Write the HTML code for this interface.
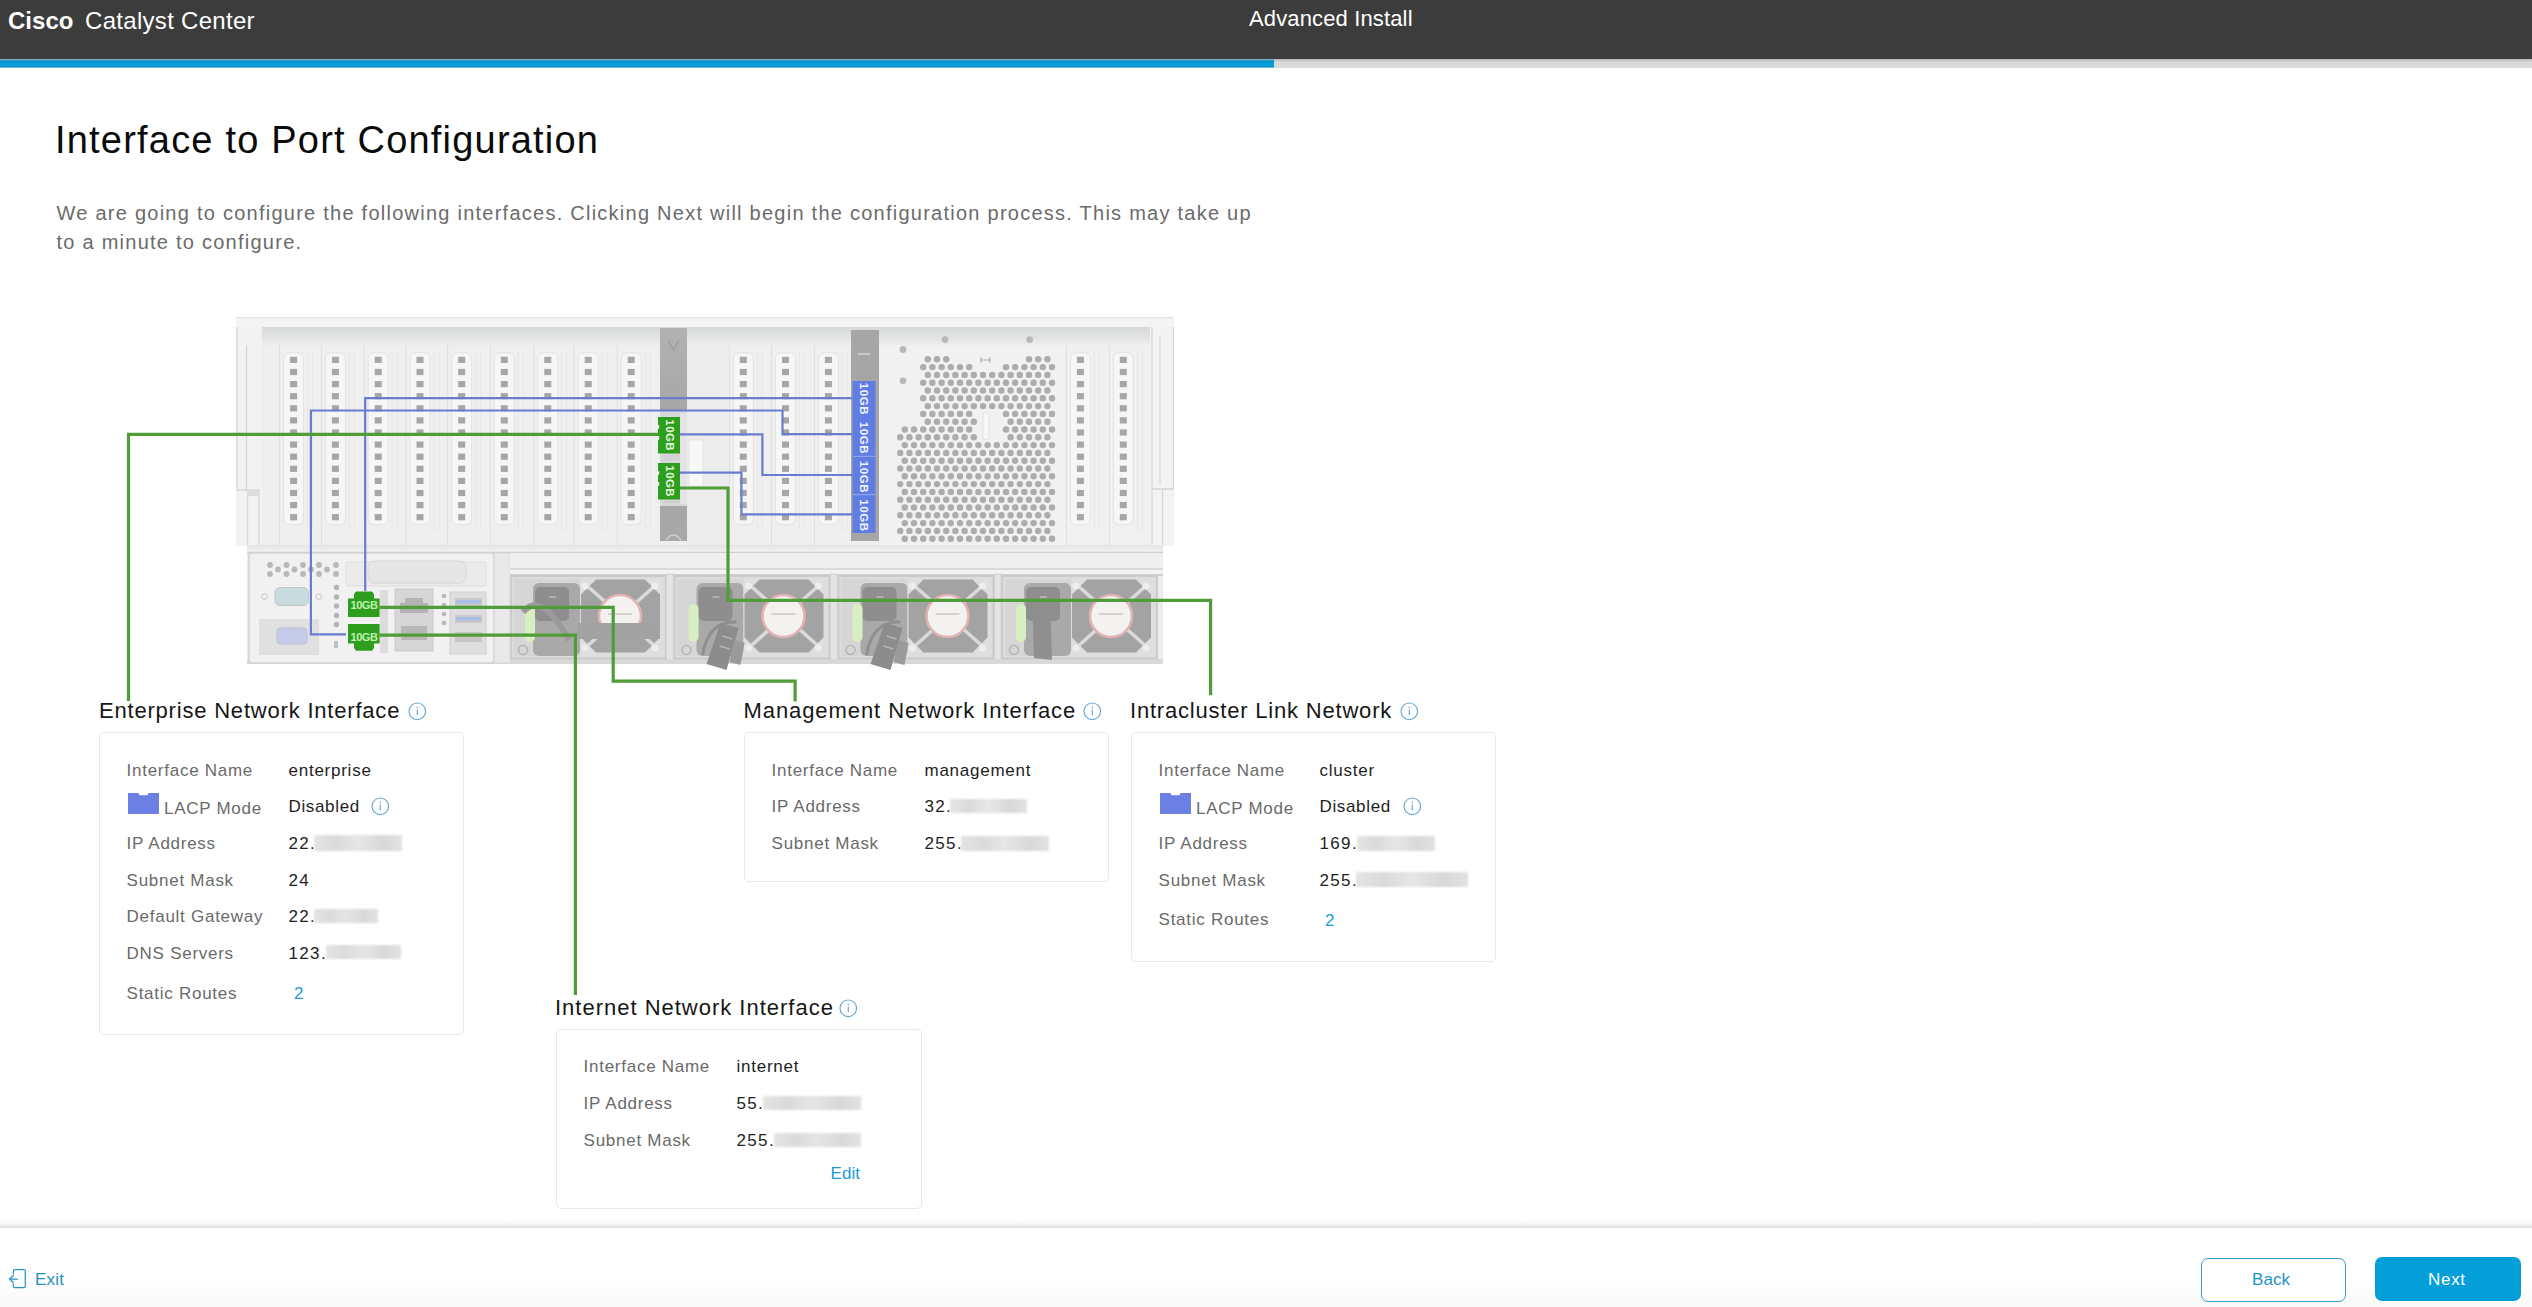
<!DOCTYPE html>
<html><head><meta charset="utf-8"><title>Interface to Port Configuration</title>
<style>
html,body{margin:0;padding:0;}
body{width:2532px;height:1307px;position:relative;overflow:hidden;background:#fff;font-family:"Liberation Sans",sans-serif;}
.t{position:absolute;white-space:nowrap;}
.r{position:absolute;}
svg.r{overflow:visible;}
</style></head><body>
<div class="r" style="left:0.0px;top:0.0px;width:2532.0px;height:59.0px;background:#3c3c3c"></div>
<div class="t" style="left:8.0px;top:9.0px;font-size:24px;line-height:24px;color:#fff;letter-spacing:0.03px;font-weight:700;">Cisco</div>
<div class="t" style="left:85.0px;top:9.0px;font-size:24px;line-height:24px;color:#fff;letter-spacing:0.3px;font-weight:400;">Catalyst Center</div>
<div class="t" style="left:1249.0px;top:7.9px;font-size:22px;line-height:22px;color:#fff;letter-spacing:0.14px;font-weight:400;">Advanced Install</div>
<div class="r" style="left:0.0px;top:59.0px;width:2532.0px;height:9.0px;background:linear-gradient(#b8b8b8,#d8d8d8 35%,#dcdcdc)"></div>
<div class="r" style="left:0.0px;top:59.0px;width:1274.0px;height:9.0px;background:linear-gradient(#86b8d0,#0a8fc0 25%,#049fd9 45%,#049fd9 75%,#1a8fc0 85%,#8fd0ea)"></div>
<div class="t" style="left:55.0px;top:121.4px;font-size:38px;line-height:38px;color:#0a0a0a;letter-spacing:1.2px;font-weight:400;">Interface to Port Configuration</div>
<div class="t" style="left:56.5px;top:202.7px;font-size:20px;line-height:20px;color:#6b6b6b;letter-spacing:1.25px;font-weight:400;">We are going to configure the following interfaces. Clicking Next will begin the configuration process. This may take up</div>
<div class="t" style="left:56.5px;top:232.3px;font-size:20px;line-height:20px;color:#6b6b6b;letter-spacing:1.25px;font-weight:400;">to a minute to configure.</div>
<svg class="r" style="left:0;top:0" width="2532" height="1307" viewBox="0 0 2532 1307"><rect x="236" y="317" width="938" height="229" fill="#efefef"/><rect x="236" y="317" width="938" height="10" fill="#f4f4f4"/><rect x="236" y="317" width="938" height="1.2" fill="#e2e2e2"/><defs><linearGradient id="gband" x1="0" y1="0" x2="0" y2="1"><stop offset="0" stop-color="#d8dada"/><stop offset="0.45" stop-color="#e2e3e3"/><stop offset="1" stop-color="#efefef" stop-opacity="0"/></linearGradient><linearGradient id="grail" x1="0" y1="0" x2="0" y2="1"><stop offset="0" stop-color="#e4e4e4"/><stop offset="1" stop-color="#f3f3f3"/></linearGradient></defs><rect x="254" y="327" width="898" height="24" fill="url(#gband)"/><rect x="236" y="327" width="26" height="219" fill="#f2f2f2"/><path d="M237 327 V490 H259 V546 M246.5 345 V490 M247.5 496 V546" stroke="#d6d6d6" stroke-width="1.3" fill="none"/><rect x="247" y="490" width="12" height="6" fill="#dddddd"/><rect x="1150" y="327" width="24" height="219" fill="#f3f3f3"/><rect x="1135" y="345" width="15" height="201" fill="#efefef"/><path d="M1135 345 V546" stroke="#dedede" stroke-width="1"/><path d="M1152 327 V489 H1174 M1173.5 327 V489 M1162.5 489 V546 M1152 489 V546" stroke="#d4d4d4" stroke-width="1.3" fill="none"/><path d="M1160 336 V485" stroke="#e2e2e2" stroke-width="2"/><path d="M279.6 345 V546" stroke="#dedede" stroke-width="1"/><path d="M307.6 352 V530 M312.6 352 V530" stroke="#e6e6e6" stroke-width="1"/><rect x="283.6" y="352.7" width="20" height="172" rx="6" fill="#f6f6f6" stroke="#e2e2e2" stroke-width="1"/><rect x="290.1" y="356.8" width="7" height="6.2" fill="#a6a6a6"/><rect x="290.1" y="368.9" width="7" height="6.2" fill="#a6a6a6"/><rect x="290.1" y="381.0" width="7" height="6.2" fill="#a6a6a6"/><rect x="290.1" y="393.1" width="7" height="6.2" fill="#a6a6a6"/><rect x="290.1" y="405.2" width="7" height="6.2" fill="#a6a6a6"/><rect x="290.1" y="417.3" width="7" height="6.2" fill="#a6a6a6"/><rect x="290.1" y="429.4" width="7" height="6.2" fill="#a6a6a6"/><rect x="290.1" y="441.5" width="7" height="6.2" fill="#a6a6a6"/><rect x="290.1" y="453.6" width="7" height="6.2" fill="#a6a6a6"/><rect x="290.1" y="465.7" width="7" height="6.2" fill="#a6a6a6"/><rect x="290.1" y="477.8" width="7" height="6.2" fill="#a6a6a6"/><rect x="290.1" y="489.9" width="7" height="6.2" fill="#a6a6a6"/><rect x="290.1" y="502.0" width="7" height="6.2" fill="#a6a6a6"/><rect x="290.1" y="514.1" width="7" height="6.2" fill="#a6a6a6"/><path d="M321.4 345 V546" stroke="#dedede" stroke-width="1"/><path d="M349.4 352 V530 M354.4 352 V530" stroke="#e6e6e6" stroke-width="1"/><rect x="325.4" y="352.7" width="20" height="172" rx="6" fill="#f6f6f6" stroke="#e2e2e2" stroke-width="1"/><rect x="331.9" y="356.8" width="7" height="6.2" fill="#a6a6a6"/><rect x="331.9" y="368.9" width="7" height="6.2" fill="#a6a6a6"/><rect x="331.9" y="381.0" width="7" height="6.2" fill="#a6a6a6"/><rect x="331.9" y="393.1" width="7" height="6.2" fill="#a6a6a6"/><rect x="331.9" y="405.2" width="7" height="6.2" fill="#a6a6a6"/><rect x="331.9" y="417.3" width="7" height="6.2" fill="#a6a6a6"/><rect x="331.9" y="429.4" width="7" height="6.2" fill="#a6a6a6"/><rect x="331.9" y="441.5" width="7" height="6.2" fill="#a6a6a6"/><rect x="331.9" y="453.6" width="7" height="6.2" fill="#a6a6a6"/><rect x="331.9" y="465.7" width="7" height="6.2" fill="#a6a6a6"/><rect x="331.9" y="477.8" width="7" height="6.2" fill="#a6a6a6"/><rect x="331.9" y="489.9" width="7" height="6.2" fill="#a6a6a6"/><rect x="331.9" y="502.0" width="7" height="6.2" fill="#a6a6a6"/><rect x="331.9" y="514.1" width="7" height="6.2" fill="#a6a6a6"/><path d="M364.2 345 V546" stroke="#dedede" stroke-width="1"/><path d="M392.2 352 V530 M397.2 352 V530" stroke="#e6e6e6" stroke-width="1"/><rect x="368.2" y="352.7" width="20" height="172" rx="6" fill="#f6f6f6" stroke="#e2e2e2" stroke-width="1"/><rect x="374.7" y="356.8" width="7" height="6.2" fill="#a6a6a6"/><rect x="374.7" y="368.9" width="7" height="6.2" fill="#a6a6a6"/><rect x="374.7" y="381.0" width="7" height="6.2" fill="#a6a6a6"/><rect x="374.7" y="393.1" width="7" height="6.2" fill="#a6a6a6"/><rect x="374.7" y="405.2" width="7" height="6.2" fill="#a6a6a6"/><rect x="374.7" y="417.3" width="7" height="6.2" fill="#a6a6a6"/><rect x="374.7" y="429.4" width="7" height="6.2" fill="#a6a6a6"/><rect x="374.7" y="441.5" width="7" height="6.2" fill="#a6a6a6"/><rect x="374.7" y="453.6" width="7" height="6.2" fill="#a6a6a6"/><rect x="374.7" y="465.7" width="7" height="6.2" fill="#a6a6a6"/><rect x="374.7" y="477.8" width="7" height="6.2" fill="#a6a6a6"/><rect x="374.7" y="489.9" width="7" height="6.2" fill="#a6a6a6"/><rect x="374.7" y="502.0" width="7" height="6.2" fill="#a6a6a6"/><rect x="374.7" y="514.1" width="7" height="6.2" fill="#a6a6a6"/><path d="M406.0 345 V546" stroke="#dedede" stroke-width="1"/><path d="M434.0 352 V530 M439.0 352 V530" stroke="#e6e6e6" stroke-width="1"/><rect x="410.0" y="352.7" width="20" height="172" rx="6" fill="#f6f6f6" stroke="#e2e2e2" stroke-width="1"/><rect x="416.5" y="356.8" width="7" height="6.2" fill="#a6a6a6"/><rect x="416.5" y="368.9" width="7" height="6.2" fill="#a6a6a6"/><rect x="416.5" y="381.0" width="7" height="6.2" fill="#a6a6a6"/><rect x="416.5" y="393.1" width="7" height="6.2" fill="#a6a6a6"/><rect x="416.5" y="405.2" width="7" height="6.2" fill="#a6a6a6"/><rect x="416.5" y="417.3" width="7" height="6.2" fill="#a6a6a6"/><rect x="416.5" y="429.4" width="7" height="6.2" fill="#a6a6a6"/><rect x="416.5" y="441.5" width="7" height="6.2" fill="#a6a6a6"/><rect x="416.5" y="453.6" width="7" height="6.2" fill="#a6a6a6"/><rect x="416.5" y="465.7" width="7" height="6.2" fill="#a6a6a6"/><rect x="416.5" y="477.8" width="7" height="6.2" fill="#a6a6a6"/><rect x="416.5" y="489.9" width="7" height="6.2" fill="#a6a6a6"/><rect x="416.5" y="502.0" width="7" height="6.2" fill="#a6a6a6"/><rect x="416.5" y="514.1" width="7" height="6.2" fill="#a6a6a6"/><path d="M447.7 345 V546" stroke="#dedede" stroke-width="1"/><path d="M475.7 352 V530 M480.7 352 V530" stroke="#e6e6e6" stroke-width="1"/><rect x="451.7" y="352.7" width="20" height="172" rx="6" fill="#f6f6f6" stroke="#e2e2e2" stroke-width="1"/><rect x="458.2" y="356.8" width="7" height="6.2" fill="#a6a6a6"/><rect x="458.2" y="368.9" width="7" height="6.2" fill="#a6a6a6"/><rect x="458.2" y="381.0" width="7" height="6.2" fill="#a6a6a6"/><rect x="458.2" y="393.1" width="7" height="6.2" fill="#a6a6a6"/><rect x="458.2" y="405.2" width="7" height="6.2" fill="#a6a6a6"/><rect x="458.2" y="417.3" width="7" height="6.2" fill="#a6a6a6"/><rect x="458.2" y="429.4" width="7" height="6.2" fill="#a6a6a6"/><rect x="458.2" y="441.5" width="7" height="6.2" fill="#a6a6a6"/><rect x="458.2" y="453.6" width="7" height="6.2" fill="#a6a6a6"/><rect x="458.2" y="465.7" width="7" height="6.2" fill="#a6a6a6"/><rect x="458.2" y="477.8" width="7" height="6.2" fill="#a6a6a6"/><rect x="458.2" y="489.9" width="7" height="6.2" fill="#a6a6a6"/><rect x="458.2" y="502.0" width="7" height="6.2" fill="#a6a6a6"/><rect x="458.2" y="514.1" width="7" height="6.2" fill="#a6a6a6"/><path d="M490.3 345 V546" stroke="#dedede" stroke-width="1"/><path d="M518.3 352 V530 M523.3 352 V530" stroke="#e6e6e6" stroke-width="1"/><rect x="494.3" y="352.7" width="20" height="172" rx="6" fill="#f6f6f6" stroke="#e2e2e2" stroke-width="1"/><rect x="500.8" y="356.8" width="7" height="6.2" fill="#a6a6a6"/><rect x="500.8" y="368.9" width="7" height="6.2" fill="#a6a6a6"/><rect x="500.8" y="381.0" width="7" height="6.2" fill="#a6a6a6"/><rect x="500.8" y="393.1" width="7" height="6.2" fill="#a6a6a6"/><rect x="500.8" y="405.2" width="7" height="6.2" fill="#a6a6a6"/><rect x="500.8" y="417.3" width="7" height="6.2" fill="#a6a6a6"/><rect x="500.8" y="429.4" width="7" height="6.2" fill="#a6a6a6"/><rect x="500.8" y="441.5" width="7" height="6.2" fill="#a6a6a6"/><rect x="500.8" y="453.6" width="7" height="6.2" fill="#a6a6a6"/><rect x="500.8" y="465.7" width="7" height="6.2" fill="#a6a6a6"/><rect x="500.8" y="477.8" width="7" height="6.2" fill="#a6a6a6"/><rect x="500.8" y="489.9" width="7" height="6.2" fill="#a6a6a6"/><rect x="500.8" y="502.0" width="7" height="6.2" fill="#a6a6a6"/><rect x="500.8" y="514.1" width="7" height="6.2" fill="#a6a6a6"/><path d="M533.8 345 V546" stroke="#dedede" stroke-width="1"/><path d="M561.8 352 V530 M566.8 352 V530" stroke="#e6e6e6" stroke-width="1"/><rect x="537.8" y="352.7" width="20" height="172" rx="6" fill="#f6f6f6" stroke="#e2e2e2" stroke-width="1"/><rect x="544.3" y="356.8" width="7" height="6.2" fill="#a6a6a6"/><rect x="544.3" y="368.9" width="7" height="6.2" fill="#a6a6a6"/><rect x="544.3" y="381.0" width="7" height="6.2" fill="#a6a6a6"/><rect x="544.3" y="393.1" width="7" height="6.2" fill="#a6a6a6"/><rect x="544.3" y="405.2" width="7" height="6.2" fill="#a6a6a6"/><rect x="544.3" y="417.3" width="7" height="6.2" fill="#a6a6a6"/><rect x="544.3" y="429.4" width="7" height="6.2" fill="#a6a6a6"/><rect x="544.3" y="441.5" width="7" height="6.2" fill="#a6a6a6"/><rect x="544.3" y="453.6" width="7" height="6.2" fill="#a6a6a6"/><rect x="544.3" y="465.7" width="7" height="6.2" fill="#a6a6a6"/><rect x="544.3" y="477.8" width="7" height="6.2" fill="#a6a6a6"/><rect x="544.3" y="489.9" width="7" height="6.2" fill="#a6a6a6"/><rect x="544.3" y="502.0" width="7" height="6.2" fill="#a6a6a6"/><rect x="544.3" y="514.1" width="7" height="6.2" fill="#a6a6a6"/><path d="M574.2 345 V546" stroke="#dedede" stroke-width="1"/><path d="M602.2 352 V530 M607.2 352 V530" stroke="#e6e6e6" stroke-width="1"/><rect x="578.2" y="352.7" width="20" height="172" rx="6" fill="#f6f6f6" stroke="#e2e2e2" stroke-width="1"/><rect x="584.7" y="356.8" width="7" height="6.2" fill="#a6a6a6"/><rect x="584.7" y="368.9" width="7" height="6.2" fill="#a6a6a6"/><rect x="584.7" y="381.0" width="7" height="6.2" fill="#a6a6a6"/><rect x="584.7" y="393.1" width="7" height="6.2" fill="#a6a6a6"/><rect x="584.7" y="405.2" width="7" height="6.2" fill="#a6a6a6"/><rect x="584.7" y="417.3" width="7" height="6.2" fill="#a6a6a6"/><rect x="584.7" y="429.4" width="7" height="6.2" fill="#a6a6a6"/><rect x="584.7" y="441.5" width="7" height="6.2" fill="#a6a6a6"/><rect x="584.7" y="453.6" width="7" height="6.2" fill="#a6a6a6"/><rect x="584.7" y="465.7" width="7" height="6.2" fill="#a6a6a6"/><rect x="584.7" y="477.8" width="7" height="6.2" fill="#a6a6a6"/><rect x="584.7" y="489.9" width="7" height="6.2" fill="#a6a6a6"/><rect x="584.7" y="502.0" width="7" height="6.2" fill="#a6a6a6"/><rect x="584.7" y="514.1" width="7" height="6.2" fill="#a6a6a6"/><path d="M617.2 345 V546" stroke="#dedede" stroke-width="1"/><path d="M645.2 352 V530 M650.2 352 V530" stroke="#e6e6e6" stroke-width="1"/><rect x="621.2" y="352.7" width="20" height="172" rx="6" fill="#f6f6f6" stroke="#e2e2e2" stroke-width="1"/><rect x="627.7" y="356.8" width="7" height="6.2" fill="#a6a6a6"/><rect x="627.7" y="368.9" width="7" height="6.2" fill="#a6a6a6"/><rect x="627.7" y="381.0" width="7" height="6.2" fill="#a6a6a6"/><rect x="627.7" y="393.1" width="7" height="6.2" fill="#a6a6a6"/><rect x="627.7" y="405.2" width="7" height="6.2" fill="#a6a6a6"/><rect x="627.7" y="417.3" width="7" height="6.2" fill="#a6a6a6"/><rect x="627.7" y="429.4" width="7" height="6.2" fill="#a6a6a6"/><rect x="627.7" y="441.5" width="7" height="6.2" fill="#a6a6a6"/><rect x="627.7" y="453.6" width="7" height="6.2" fill="#a6a6a6"/><rect x="627.7" y="465.7" width="7" height="6.2" fill="#a6a6a6"/><rect x="627.7" y="477.8" width="7" height="6.2" fill="#a6a6a6"/><rect x="627.7" y="489.9" width="7" height="6.2" fill="#a6a6a6"/><rect x="627.7" y="502.0" width="7" height="6.2" fill="#a6a6a6"/><rect x="627.7" y="514.1" width="7" height="6.2" fill="#a6a6a6"/><path d="M729.3 345 V546" stroke="#dedede" stroke-width="1"/><path d="M757.3 352 V530 M762.3 352 V530" stroke="#e6e6e6" stroke-width="1"/><rect x="733.3" y="352.7" width="20" height="172" rx="6" fill="#f6f6f6" stroke="#e2e2e2" stroke-width="1"/><rect x="739.8" y="356.8" width="7" height="6.2" fill="#a6a6a6"/><rect x="739.8" y="368.9" width="7" height="6.2" fill="#a6a6a6"/><rect x="739.8" y="381.0" width="7" height="6.2" fill="#a6a6a6"/><rect x="739.8" y="393.1" width="7" height="6.2" fill="#a6a6a6"/><rect x="739.8" y="405.2" width="7" height="6.2" fill="#a6a6a6"/><rect x="739.8" y="417.3" width="7" height="6.2" fill="#a6a6a6"/><rect x="739.8" y="429.4" width="7" height="6.2" fill="#a6a6a6"/><rect x="739.8" y="441.5" width="7" height="6.2" fill="#a6a6a6"/><rect x="739.8" y="453.6" width="7" height="6.2" fill="#a6a6a6"/><rect x="739.8" y="465.7" width="7" height="6.2" fill="#a6a6a6"/><rect x="739.8" y="477.8" width="7" height="6.2" fill="#a6a6a6"/><rect x="739.8" y="489.9" width="7" height="6.2" fill="#a6a6a6"/><rect x="739.8" y="502.0" width="7" height="6.2" fill="#a6a6a6"/><rect x="739.8" y="514.1" width="7" height="6.2" fill="#a6a6a6"/><path d="M771.5 345 V546" stroke="#dedede" stroke-width="1"/><path d="M799.5 352 V530 M804.5 352 V530" stroke="#e6e6e6" stroke-width="1"/><rect x="775.5" y="352.7" width="20" height="172" rx="6" fill="#f6f6f6" stroke="#e2e2e2" stroke-width="1"/><rect x="782.0" y="356.8" width="7" height="6.2" fill="#a6a6a6"/><rect x="782.0" y="368.9" width="7" height="6.2" fill="#a6a6a6"/><rect x="782.0" y="381.0" width="7" height="6.2" fill="#a6a6a6"/><rect x="782.0" y="393.1" width="7" height="6.2" fill="#a6a6a6"/><rect x="782.0" y="405.2" width="7" height="6.2" fill="#a6a6a6"/><rect x="782.0" y="417.3" width="7" height="6.2" fill="#a6a6a6"/><rect x="782.0" y="429.4" width="7" height="6.2" fill="#a6a6a6"/><rect x="782.0" y="441.5" width="7" height="6.2" fill="#a6a6a6"/><rect x="782.0" y="453.6" width="7" height="6.2" fill="#a6a6a6"/><rect x="782.0" y="465.7" width="7" height="6.2" fill="#a6a6a6"/><rect x="782.0" y="477.8" width="7" height="6.2" fill="#a6a6a6"/><rect x="782.0" y="489.9" width="7" height="6.2" fill="#a6a6a6"/><rect x="782.0" y="502.0" width="7" height="6.2" fill="#a6a6a6"/><rect x="782.0" y="514.1" width="7" height="6.2" fill="#a6a6a6"/><path d="M814.4 345 V546" stroke="#dedede" stroke-width="1"/><path d="M842.4 352 V530 M847.4 352 V530" stroke="#e6e6e6" stroke-width="1"/><rect x="818.4" y="352.7" width="20" height="172" rx="6" fill="#f6f6f6" stroke="#e2e2e2" stroke-width="1"/><rect x="824.9" y="356.8" width="7" height="6.2" fill="#a6a6a6"/><rect x="824.9" y="368.9" width="7" height="6.2" fill="#a6a6a6"/><rect x="824.9" y="381.0" width="7" height="6.2" fill="#a6a6a6"/><rect x="824.9" y="393.1" width="7" height="6.2" fill="#a6a6a6"/><rect x="824.9" y="405.2" width="7" height="6.2" fill="#a6a6a6"/><rect x="824.9" y="417.3" width="7" height="6.2" fill="#a6a6a6"/><rect x="824.9" y="429.4" width="7" height="6.2" fill="#a6a6a6"/><rect x="824.9" y="441.5" width="7" height="6.2" fill="#a6a6a6"/><rect x="824.9" y="453.6" width="7" height="6.2" fill="#a6a6a6"/><rect x="824.9" y="465.7" width="7" height="6.2" fill="#a6a6a6"/><rect x="824.9" y="477.8" width="7" height="6.2" fill="#a6a6a6"/><rect x="824.9" y="489.9" width="7" height="6.2" fill="#a6a6a6"/><rect x="824.9" y="502.0" width="7" height="6.2" fill="#a6a6a6"/><rect x="824.9" y="514.1" width="7" height="6.2" fill="#a6a6a6"/><path d="M1066.4 345 V546" stroke="#dedede" stroke-width="1"/><path d="M1094.4 352 V530 M1099.4 352 V530" stroke="#e6e6e6" stroke-width="1"/><rect x="1070.4" y="352.7" width="20" height="172" rx="6" fill="#f6f6f6" stroke="#e2e2e2" stroke-width="1"/><rect x="1076.9" y="356.8" width="7" height="6.2" fill="#a6a6a6"/><rect x="1076.9" y="368.9" width="7" height="6.2" fill="#a6a6a6"/><rect x="1076.9" y="381.0" width="7" height="6.2" fill="#a6a6a6"/><rect x="1076.9" y="393.1" width="7" height="6.2" fill="#a6a6a6"/><rect x="1076.9" y="405.2" width="7" height="6.2" fill="#a6a6a6"/><rect x="1076.9" y="417.3" width="7" height="6.2" fill="#a6a6a6"/><rect x="1076.9" y="429.4" width="7" height="6.2" fill="#a6a6a6"/><rect x="1076.9" y="441.5" width="7" height="6.2" fill="#a6a6a6"/><rect x="1076.9" y="453.6" width="7" height="6.2" fill="#a6a6a6"/><rect x="1076.9" y="465.7" width="7" height="6.2" fill="#a6a6a6"/><rect x="1076.9" y="477.8" width="7" height="6.2" fill="#a6a6a6"/><rect x="1076.9" y="489.9" width="7" height="6.2" fill="#a6a6a6"/><rect x="1076.9" y="502.0" width="7" height="6.2" fill="#a6a6a6"/><rect x="1076.9" y="514.1" width="7" height="6.2" fill="#a6a6a6"/><path d="M1109.3 345 V546" stroke="#dedede" stroke-width="1"/><path d="M1137.3 352 V530 M1142.3 352 V530" stroke="#e6e6e6" stroke-width="1"/><rect x="1113.3" y="352.7" width="20" height="172" rx="6" fill="#f6f6f6" stroke="#e2e2e2" stroke-width="1"/><rect x="1119.8" y="356.8" width="7" height="6.2" fill="#a6a6a6"/><rect x="1119.8" y="368.9" width="7" height="6.2" fill="#a6a6a6"/><rect x="1119.8" y="381.0" width="7" height="6.2" fill="#a6a6a6"/><rect x="1119.8" y="393.1" width="7" height="6.2" fill="#a6a6a6"/><rect x="1119.8" y="405.2" width="7" height="6.2" fill="#a6a6a6"/><rect x="1119.8" y="417.3" width="7" height="6.2" fill="#a6a6a6"/><rect x="1119.8" y="429.4" width="7" height="6.2" fill="#a6a6a6"/><rect x="1119.8" y="441.5" width="7" height="6.2" fill="#a6a6a6"/><rect x="1119.8" y="453.6" width="7" height="6.2" fill="#a6a6a6"/><rect x="1119.8" y="465.7" width="7" height="6.2" fill="#a6a6a6"/><rect x="1119.8" y="477.8" width="7" height="6.2" fill="#a6a6a6"/><rect x="1119.8" y="489.9" width="7" height="6.2" fill="#a6a6a6"/><rect x="1119.8" y="502.0" width="7" height="6.2" fill="#a6a6a6"/><rect x="1119.8" y="514.1" width="7" height="6.2" fill="#a6a6a6"/><rect x="687" y="345" width="40" height="200" fill="#ececec"/><rect x="689" y="440" width="14" height="46" fill="#f8f8f8" stroke="#e4e4e4" stroke-width="0.8"/><defs><linearGradient id="griser" x1="0" y1="0" x2="0" y2="1"><stop offset="0" stop-color="#b2b2b2"/><stop offset="0.5" stop-color="#a4a4a4"/><stop offset="1" stop-color="#a8a8a8"/></linearGradient></defs><rect x="660" y="328" width="27" height="213" fill="url(#griser)"/><path d="M668 340 L673.5 350 L679 340" stroke="#9d9d9d" stroke-width="1.5" fill="none"/><path d="M666 540 Q673.5 530 681 540" stroke="#cfcfcf" stroke-width="1.5" fill="none"/><rect x="851" y="330" width="28" height="211" fill="#a6a6a6"/><rect x="858" y="353" width="12" height="2" fill="#c8c8c8"/><rect x="852.5" y="381" width="23" height="152" fill="#5f7de3"/><path d="M853 456.4 H875.5 M853 494.6 H875.5" stroke="#8ea2ea" stroke-width="1.2"/><text x="0" y="0" transform="translate(864,399) rotate(90)" text-anchor="middle" dominant-baseline="central" font-family="Liberation Sans" font-weight="700" font-size="11.5" letter-spacing="0.6" fill="#eef1ff">10GB</text><text x="0" y="0" transform="translate(864,438) rotate(90)" text-anchor="middle" dominant-baseline="central" font-family="Liberation Sans" font-weight="700" font-size="11.5" letter-spacing="0.6" fill="#eef1ff">10GB</text><text x="0" y="0" transform="translate(864,477) rotate(90)" text-anchor="middle" dominant-baseline="central" font-family="Liberation Sans" font-weight="700" font-size="11.5" letter-spacing="0.6" fill="#eef1ff">10GB</text><text x="0" y="0" transform="translate(864,515.5) rotate(90)" text-anchor="middle" dominant-baseline="central" font-family="Liberation Sans" font-weight="700" font-size="11.5" letter-spacing="0.6" fill="#eef1ff">10GB</text><rect x="879" y="345" width="191" height="200" fill="#f1f1f1"/><rect x="1070" y="345" width="80" height="200" fill="#f0f0f0"/><path d="M1066.4 345 V546" stroke="#dedede" stroke-width="1"/><path d="M1094.4 352 V530 M1099.4 352 V530" stroke="#e6e6e6" stroke-width="1"/><rect x="1070.4" y="352.7" width="20" height="172" rx="6" fill="#f6f6f6" stroke="#e2e2e2" stroke-width="1"/><rect x="1076.9" y="356.8" width="7" height="6.2" fill="#a6a6a6"/><rect x="1076.9" y="368.9" width="7" height="6.2" fill="#a6a6a6"/><rect x="1076.9" y="381.0" width="7" height="6.2" fill="#a6a6a6"/><rect x="1076.9" y="393.1" width="7" height="6.2" fill="#a6a6a6"/><rect x="1076.9" y="405.2" width="7" height="6.2" fill="#a6a6a6"/><rect x="1076.9" y="417.3" width="7" height="6.2" fill="#a6a6a6"/><rect x="1076.9" y="429.4" width="7" height="6.2" fill="#a6a6a6"/><rect x="1076.9" y="441.5" width="7" height="6.2" fill="#a6a6a6"/><rect x="1076.9" y="453.6" width="7" height="6.2" fill="#a6a6a6"/><rect x="1076.9" y="465.7" width="7" height="6.2" fill="#a6a6a6"/><rect x="1076.9" y="477.8" width="7" height="6.2" fill="#a6a6a6"/><rect x="1076.9" y="489.9" width="7" height="6.2" fill="#a6a6a6"/><rect x="1076.9" y="502.0" width="7" height="6.2" fill="#a6a6a6"/><rect x="1076.9" y="514.1" width="7" height="6.2" fill="#a6a6a6"/><path d="M1109.3 345 V546" stroke="#dedede" stroke-width="1"/><path d="M1137.3 352 V530 M1142.3 352 V530" stroke="#e6e6e6" stroke-width="1"/><rect x="1113.3" y="352.7" width="20" height="172" rx="6" fill="#f6f6f6" stroke="#e2e2e2" stroke-width="1"/><rect x="1119.8" y="356.8" width="7" height="6.2" fill="#a6a6a6"/><rect x="1119.8" y="368.9" width="7" height="6.2" fill="#a6a6a6"/><rect x="1119.8" y="381.0" width="7" height="6.2" fill="#a6a6a6"/><rect x="1119.8" y="393.1" width="7" height="6.2" fill="#a6a6a6"/><rect x="1119.8" y="405.2" width="7" height="6.2" fill="#a6a6a6"/><rect x="1119.8" y="417.3" width="7" height="6.2" fill="#a6a6a6"/><rect x="1119.8" y="429.4" width="7" height="6.2" fill="#a6a6a6"/><rect x="1119.8" y="441.5" width="7" height="6.2" fill="#a6a6a6"/><rect x="1119.8" y="453.6" width="7" height="6.2" fill="#a6a6a6"/><rect x="1119.8" y="465.7" width="7" height="6.2" fill="#a6a6a6"/><rect x="1119.8" y="477.8" width="7" height="6.2" fill="#a6a6a6"/><rect x="1119.8" y="489.9" width="7" height="6.2" fill="#a6a6a6"/><rect x="1119.8" y="502.0" width="7" height="6.2" fill="#a6a6a6"/><rect x="1119.8" y="514.1" width="7" height="6.2" fill="#a6a6a6"/><circle cx="945" cy="339.6" r="3.4" fill="#b9b9b9"/><circle cx="1029.7" cy="339.6" r="3.4" fill="#b9b9b9"/><circle cx="903" cy="349.5" r="3.4" fill="#b9b9b9"/><circle cx="903" cy="380.8" r="3.4" fill="#b9b9b9"/><path d="M981 360 H990 M981 357.5 V362.5 M990 357.5 V362.5" stroke="#a8a8a8" stroke-width="1.2"/><g fill="#acacac"><circle cx="927.8" cy="359.3" r="3.2"/><circle cx="937.0" cy="359.3" r="3.2"/><circle cx="946.2" cy="359.3" r="3.2"/><circle cx="1029.0" cy="359.3" r="3.2"/><circle cx="1038.2" cy="359.3" r="3.2"/><circle cx="1047.4" cy="359.3" r="3.2"/><circle cx="923.2" cy="367.1" r="3.2"/><circle cx="932.4" cy="367.1" r="3.2"/><circle cx="941.6" cy="367.1" r="3.2"/><circle cx="950.8" cy="367.1" r="3.2"/><circle cx="960.0" cy="367.1" r="3.2"/><circle cx="969.2" cy="367.1" r="3.2"/><circle cx="1006.0" cy="367.1" r="3.2"/><circle cx="1015.2" cy="367.1" r="3.2"/><circle cx="1024.4" cy="367.1" r="3.2"/><circle cx="1033.6" cy="367.1" r="3.2"/><circle cx="1042.8" cy="367.1" r="3.2"/><circle cx="1052.0" cy="367.1" r="3.2"/><circle cx="927.8" cy="374.9" r="3.2"/><circle cx="937.0" cy="374.9" r="3.2"/><circle cx="946.2" cy="374.9" r="3.2"/><circle cx="955.4" cy="374.9" r="3.2"/><circle cx="964.6" cy="374.9" r="3.2"/><circle cx="973.8" cy="374.9" r="3.2"/><circle cx="983.0" cy="374.9" r="3.2"/><circle cx="992.2" cy="374.9" r="3.2"/><circle cx="1001.4" cy="374.9" r="3.2"/><circle cx="1010.6" cy="374.9" r="3.2"/><circle cx="1019.8" cy="374.9" r="3.2"/><circle cx="1029.0" cy="374.9" r="3.2"/><circle cx="1038.2" cy="374.9" r="3.2"/><circle cx="1047.4" cy="374.9" r="3.2"/><circle cx="923.2" cy="382.7" r="3.2"/><circle cx="932.4" cy="382.7" r="3.2"/><circle cx="941.6" cy="382.7" r="3.2"/><circle cx="950.8" cy="382.7" r="3.2"/><circle cx="960.0" cy="382.7" r="3.2"/><circle cx="969.2" cy="382.7" r="3.2"/><circle cx="978.4" cy="382.7" r="3.2"/><circle cx="987.6" cy="382.7" r="3.2"/><circle cx="996.8" cy="382.7" r="3.2"/><circle cx="1006.0" cy="382.7" r="3.2"/><circle cx="1015.2" cy="382.7" r="3.2"/><circle cx="1024.4" cy="382.7" r="3.2"/><circle cx="1033.6" cy="382.7" r="3.2"/><circle cx="1042.8" cy="382.7" r="3.2"/><circle cx="1052.0" cy="382.7" r="3.2"/><circle cx="927.8" cy="390.5" r="3.2"/><circle cx="937.0" cy="390.5" r="3.2"/><circle cx="946.2" cy="390.5" r="3.2"/><circle cx="955.4" cy="390.5" r="3.2"/><circle cx="964.6" cy="390.5" r="3.2"/><circle cx="973.8" cy="390.5" r="3.2"/><circle cx="983.0" cy="390.5" r="3.2"/><circle cx="992.2" cy="390.5" r="3.2"/><circle cx="1001.4" cy="390.5" r="3.2"/><circle cx="1010.6" cy="390.5" r="3.2"/><circle cx="1019.8" cy="390.5" r="3.2"/><circle cx="1029.0" cy="390.5" r="3.2"/><circle cx="1038.2" cy="390.5" r="3.2"/><circle cx="1047.4" cy="390.5" r="3.2"/><circle cx="923.2" cy="398.3" r="3.2"/><circle cx="932.4" cy="398.3" r="3.2"/><circle cx="941.6" cy="398.3" r="3.2"/><circle cx="950.8" cy="398.3" r="3.2"/><circle cx="960.0" cy="398.3" r="3.2"/><circle cx="969.2" cy="398.3" r="3.2"/><circle cx="978.4" cy="398.3" r="3.2"/><circle cx="987.6" cy="398.3" r="3.2"/><circle cx="996.8" cy="398.3" r="3.2"/><circle cx="1006.0" cy="398.3" r="3.2"/><circle cx="1015.2" cy="398.3" r="3.2"/><circle cx="1024.4" cy="398.3" r="3.2"/><circle cx="1033.6" cy="398.3" r="3.2"/><circle cx="1042.8" cy="398.3" r="3.2"/><circle cx="1052.0" cy="398.3" r="3.2"/><circle cx="927.8" cy="406.1" r="3.2"/><circle cx="937.0" cy="406.1" r="3.2"/><circle cx="946.2" cy="406.1" r="3.2"/><circle cx="955.4" cy="406.1" r="3.2"/><circle cx="964.6" cy="406.1" r="3.2"/><circle cx="973.8" cy="406.1" r="3.2"/><circle cx="983.0" cy="406.1" r="3.2"/><circle cx="992.2" cy="406.1" r="3.2"/><circle cx="1001.4" cy="406.1" r="3.2"/><circle cx="1010.6" cy="406.1" r="3.2"/><circle cx="1019.8" cy="406.1" r="3.2"/><circle cx="1029.0" cy="406.1" r="3.2"/><circle cx="1038.2" cy="406.1" r="3.2"/><circle cx="1047.4" cy="406.1" r="3.2"/><circle cx="923.2" cy="413.9" r="3.2"/><circle cx="932.4" cy="413.9" r="3.2"/><circle cx="941.6" cy="413.9" r="3.2"/><circle cx="950.8" cy="413.9" r="3.2"/><circle cx="960.0" cy="413.9" r="3.2"/><circle cx="969.2" cy="413.9" r="3.2"/><circle cx="1006.0" cy="413.9" r="3.2"/><circle cx="1015.2" cy="413.9" r="3.2"/><circle cx="1024.4" cy="413.9" r="3.2"/><circle cx="1033.6" cy="413.9" r="3.2"/><circle cx="1042.8" cy="413.9" r="3.2"/><circle cx="1052.0" cy="413.9" r="3.2"/><circle cx="927.8" cy="421.7" r="3.2"/><circle cx="937.0" cy="421.7" r="3.2"/><circle cx="946.2" cy="421.7" r="3.2"/><circle cx="955.4" cy="421.7" r="3.2"/><circle cx="964.6" cy="421.7" r="3.2"/><circle cx="973.8" cy="421.7" r="3.2"/><circle cx="1010.6" cy="421.7" r="3.2"/><circle cx="1019.8" cy="421.7" r="3.2"/><circle cx="1029.0" cy="421.7" r="3.2"/><circle cx="1038.2" cy="421.7" r="3.2"/><circle cx="1047.4" cy="421.7" r="3.2"/><circle cx="904.8" cy="429.5" r="3.2"/><circle cx="914.0" cy="429.5" r="3.2"/><circle cx="923.2" cy="429.5" r="3.2"/><circle cx="932.4" cy="429.5" r="3.2"/><circle cx="941.6" cy="429.5" r="3.2"/><circle cx="950.8" cy="429.5" r="3.2"/><circle cx="960.0" cy="429.5" r="3.2"/><circle cx="969.2" cy="429.5" r="3.2"/><circle cx="1006.0" cy="429.5" r="3.2"/><circle cx="1015.2" cy="429.5" r="3.2"/><circle cx="1024.4" cy="429.5" r="3.2"/><circle cx="1033.6" cy="429.5" r="3.2"/><circle cx="1042.8" cy="429.5" r="3.2"/><circle cx="1052.0" cy="429.5" r="3.2"/><circle cx="900.2" cy="437.3" r="3.2"/><circle cx="909.4" cy="437.3" r="3.2"/><circle cx="918.6" cy="437.3" r="3.2"/><circle cx="927.8" cy="437.3" r="3.2"/><circle cx="937.0" cy="437.3" r="3.2"/><circle cx="946.2" cy="437.3" r="3.2"/><circle cx="955.4" cy="437.3" r="3.2"/><circle cx="964.6" cy="437.3" r="3.2"/><circle cx="973.8" cy="437.3" r="3.2"/><circle cx="1010.6" cy="437.3" r="3.2"/><circle cx="1019.8" cy="437.3" r="3.2"/><circle cx="1029.0" cy="437.3" r="3.2"/><circle cx="1038.2" cy="437.3" r="3.2"/><circle cx="1047.4" cy="437.3" r="3.2"/><circle cx="904.8" cy="445.1" r="3.2"/><circle cx="914.0" cy="445.1" r="3.2"/><circle cx="923.2" cy="445.1" r="3.2"/><circle cx="932.4" cy="445.1" r="3.2"/><circle cx="941.6" cy="445.1" r="3.2"/><circle cx="950.8" cy="445.1" r="3.2"/><circle cx="960.0" cy="445.1" r="3.2"/><circle cx="969.2" cy="445.1" r="3.2"/><circle cx="978.4" cy="445.1" r="3.2"/><circle cx="987.6" cy="445.1" r="3.2"/><circle cx="996.8" cy="445.1" r="3.2"/><circle cx="1006.0" cy="445.1" r="3.2"/><circle cx="1015.2" cy="445.1" r="3.2"/><circle cx="1024.4" cy="445.1" r="3.2"/><circle cx="1033.6" cy="445.1" r="3.2"/><circle cx="1042.8" cy="445.1" r="3.2"/><circle cx="1052.0" cy="445.1" r="3.2"/><circle cx="900.2" cy="452.9" r="3.2"/><circle cx="909.4" cy="452.9" r="3.2"/><circle cx="918.6" cy="452.9" r="3.2"/><circle cx="927.8" cy="452.9" r="3.2"/><circle cx="937.0" cy="452.9" r="3.2"/><circle cx="946.2" cy="452.9" r="3.2"/><circle cx="955.4" cy="452.9" r="3.2"/><circle cx="964.6" cy="452.9" r="3.2"/><circle cx="973.8" cy="452.9" r="3.2"/><circle cx="983.0" cy="452.9" r="3.2"/><circle cx="992.2" cy="452.9" r="3.2"/><circle cx="1001.4" cy="452.9" r="3.2"/><circle cx="1010.6" cy="452.9" r="3.2"/><circle cx="1019.8" cy="452.9" r="3.2"/><circle cx="1029.0" cy="452.9" r="3.2"/><circle cx="1038.2" cy="452.9" r="3.2"/><circle cx="1047.4" cy="452.9" r="3.2"/><circle cx="904.8" cy="460.7" r="3.2"/><circle cx="914.0" cy="460.7" r="3.2"/><circle cx="923.2" cy="460.7" r="3.2"/><circle cx="932.4" cy="460.7" r="3.2"/><circle cx="941.6" cy="460.7" r="3.2"/><circle cx="950.8" cy="460.7" r="3.2"/><circle cx="960.0" cy="460.7" r="3.2"/><circle cx="969.2" cy="460.7" r="3.2"/><circle cx="978.4" cy="460.7" r="3.2"/><circle cx="987.6" cy="460.7" r="3.2"/><circle cx="996.8" cy="460.7" r="3.2"/><circle cx="1006.0" cy="460.7" r="3.2"/><circle cx="1015.2" cy="460.7" r="3.2"/><circle cx="1024.4" cy="460.7" r="3.2"/><circle cx="1033.6" cy="460.7" r="3.2"/><circle cx="1042.8" cy="460.7" r="3.2"/><circle cx="1052.0" cy="460.7" r="3.2"/><circle cx="900.2" cy="468.5" r="3.2"/><circle cx="909.4" cy="468.5" r="3.2"/><circle cx="918.6" cy="468.5" r="3.2"/><circle cx="927.8" cy="468.5" r="3.2"/><circle cx="937.0" cy="468.5" r="3.2"/><circle cx="946.2" cy="468.5" r="3.2"/><circle cx="955.4" cy="468.5" r="3.2"/><circle cx="964.6" cy="468.5" r="3.2"/><circle cx="973.8" cy="468.5" r="3.2"/><circle cx="983.0" cy="468.5" r="3.2"/><circle cx="992.2" cy="468.5" r="3.2"/><circle cx="1001.4" cy="468.5" r="3.2"/><circle cx="1010.6" cy="468.5" r="3.2"/><circle cx="1019.8" cy="468.5" r="3.2"/><circle cx="1029.0" cy="468.5" r="3.2"/><circle cx="1038.2" cy="468.5" r="3.2"/><circle cx="1047.4" cy="468.5" r="3.2"/><circle cx="904.8" cy="476.3" r="3.2"/><circle cx="914.0" cy="476.3" r="3.2"/><circle cx="923.2" cy="476.3" r="3.2"/><circle cx="932.4" cy="476.3" r="3.2"/><circle cx="941.6" cy="476.3" r="3.2"/><circle cx="950.8" cy="476.3" r="3.2"/><circle cx="960.0" cy="476.3" r="3.2"/><circle cx="969.2" cy="476.3" r="3.2"/><circle cx="978.4" cy="476.3" r="3.2"/><circle cx="987.6" cy="476.3" r="3.2"/><circle cx="996.8" cy="476.3" r="3.2"/><circle cx="1006.0" cy="476.3" r="3.2"/><circle cx="1015.2" cy="476.3" r="3.2"/><circle cx="1024.4" cy="476.3" r="3.2"/><circle cx="1033.6" cy="476.3" r="3.2"/><circle cx="1042.8" cy="476.3" r="3.2"/><circle cx="1052.0" cy="476.3" r="3.2"/><circle cx="900.2" cy="484.1" r="3.2"/><circle cx="909.4" cy="484.1" r="3.2"/><circle cx="918.6" cy="484.1" r="3.2"/><circle cx="927.8" cy="484.1" r="3.2"/><circle cx="937.0" cy="484.1" r="3.2"/><circle cx="946.2" cy="484.1" r="3.2"/><circle cx="955.4" cy="484.1" r="3.2"/><circle cx="964.6" cy="484.1" r="3.2"/><circle cx="973.8" cy="484.1" r="3.2"/><circle cx="983.0" cy="484.1" r="3.2"/><circle cx="992.2" cy="484.1" r="3.2"/><circle cx="1001.4" cy="484.1" r="3.2"/><circle cx="1010.6" cy="484.1" r="3.2"/><circle cx="1019.8" cy="484.1" r="3.2"/><circle cx="1029.0" cy="484.1" r="3.2"/><circle cx="1038.2" cy="484.1" r="3.2"/><circle cx="1047.4" cy="484.1" r="3.2"/><circle cx="904.8" cy="491.9" r="3.2"/><circle cx="914.0" cy="491.9" r="3.2"/><circle cx="923.2" cy="491.9" r="3.2"/><circle cx="932.4" cy="491.9" r="3.2"/><circle cx="941.6" cy="491.9" r="3.2"/><circle cx="950.8" cy="491.9" r="3.2"/><circle cx="960.0" cy="491.9" r="3.2"/><circle cx="969.2" cy="491.9" r="3.2"/><circle cx="978.4" cy="491.9" r="3.2"/><circle cx="987.6" cy="491.9" r="3.2"/><circle cx="996.8" cy="491.9" r="3.2"/><circle cx="1006.0" cy="491.9" r="3.2"/><circle cx="1015.2" cy="491.9" r="3.2"/><circle cx="1024.4" cy="491.9" r="3.2"/><circle cx="1033.6" cy="491.9" r="3.2"/><circle cx="1042.8" cy="491.9" r="3.2"/><circle cx="1052.0" cy="491.9" r="3.2"/><circle cx="900.2" cy="499.7" r="3.2"/><circle cx="909.4" cy="499.7" r="3.2"/><circle cx="918.6" cy="499.7" r="3.2"/><circle cx="927.8" cy="499.7" r="3.2"/><circle cx="937.0" cy="499.7" r="3.2"/><circle cx="946.2" cy="499.7" r="3.2"/><circle cx="955.4" cy="499.7" r="3.2"/><circle cx="964.6" cy="499.7" r="3.2"/><circle cx="973.8" cy="499.7" r="3.2"/><circle cx="983.0" cy="499.7" r="3.2"/><circle cx="992.2" cy="499.7" r="3.2"/><circle cx="1001.4" cy="499.7" r="3.2"/><circle cx="1010.6" cy="499.7" r="3.2"/><circle cx="1019.8" cy="499.7" r="3.2"/><circle cx="1029.0" cy="499.7" r="3.2"/><circle cx="1038.2" cy="499.7" r="3.2"/><circle cx="1047.4" cy="499.7" r="3.2"/><circle cx="904.8" cy="507.5" r="3.2"/><circle cx="914.0" cy="507.5" r="3.2"/><circle cx="923.2" cy="507.5" r="3.2"/><circle cx="932.4" cy="507.5" r="3.2"/><circle cx="941.6" cy="507.5" r="3.2"/><circle cx="950.8" cy="507.5" r="3.2"/><circle cx="960.0" cy="507.5" r="3.2"/><circle cx="969.2" cy="507.5" r="3.2"/><circle cx="978.4" cy="507.5" r="3.2"/><circle cx="987.6" cy="507.5" r="3.2"/><circle cx="996.8" cy="507.5" r="3.2"/><circle cx="1006.0" cy="507.5" r="3.2"/><circle cx="1015.2" cy="507.5" r="3.2"/><circle cx="1024.4" cy="507.5" r="3.2"/><circle cx="1033.6" cy="507.5" r="3.2"/><circle cx="1042.8" cy="507.5" r="3.2"/><circle cx="1052.0" cy="507.5" r="3.2"/><circle cx="900.2" cy="515.3" r="3.2"/><circle cx="909.4" cy="515.3" r="3.2"/><circle cx="918.6" cy="515.3" r="3.2"/><circle cx="927.8" cy="515.3" r="3.2"/><circle cx="937.0" cy="515.3" r="3.2"/><circle cx="946.2" cy="515.3" r="3.2"/><circle cx="955.4" cy="515.3" r="3.2"/><circle cx="964.6" cy="515.3" r="3.2"/><circle cx="973.8" cy="515.3" r="3.2"/><circle cx="983.0" cy="515.3" r="3.2"/><circle cx="992.2" cy="515.3" r="3.2"/><circle cx="1001.4" cy="515.3" r="3.2"/><circle cx="1010.6" cy="515.3" r="3.2"/><circle cx="1019.8" cy="515.3" r="3.2"/><circle cx="1029.0" cy="515.3" r="3.2"/><circle cx="1038.2" cy="515.3" r="3.2"/><circle cx="1047.4" cy="515.3" r="3.2"/><circle cx="904.8" cy="523.1" r="3.2"/><circle cx="914.0" cy="523.1" r="3.2"/><circle cx="923.2" cy="523.1" r="3.2"/><circle cx="932.4" cy="523.1" r="3.2"/><circle cx="941.6" cy="523.1" r="3.2"/><circle cx="950.8" cy="523.1" r="3.2"/><circle cx="960.0" cy="523.1" r="3.2"/><circle cx="969.2" cy="523.1" r="3.2"/><circle cx="978.4" cy="523.1" r="3.2"/><circle cx="987.6" cy="523.1" r="3.2"/><circle cx="996.8" cy="523.1" r="3.2"/><circle cx="1006.0" cy="523.1" r="3.2"/><circle cx="1015.2" cy="523.1" r="3.2"/><circle cx="1024.4" cy="523.1" r="3.2"/><circle cx="1033.6" cy="523.1" r="3.2"/><circle cx="1042.8" cy="523.1" r="3.2"/><circle cx="1052.0" cy="523.1" r="3.2"/><circle cx="900.2" cy="530.9" r="3.2"/><circle cx="909.4" cy="530.9" r="3.2"/><circle cx="918.6" cy="530.9" r="3.2"/><circle cx="927.8" cy="530.9" r="3.2"/><circle cx="937.0" cy="530.9" r="3.2"/><circle cx="946.2" cy="530.9" r="3.2"/><circle cx="955.4" cy="530.9" r="3.2"/><circle cx="964.6" cy="530.9" r="3.2"/><circle cx="973.8" cy="530.9" r="3.2"/><circle cx="983.0" cy="530.9" r="3.2"/><circle cx="992.2" cy="530.9" r="3.2"/><circle cx="1001.4" cy="530.9" r="3.2"/><circle cx="1010.6" cy="530.9" r="3.2"/><circle cx="1019.8" cy="530.9" r="3.2"/><circle cx="1029.0" cy="530.9" r="3.2"/><circle cx="1038.2" cy="530.9" r="3.2"/><circle cx="1047.4" cy="530.9" r="3.2"/><circle cx="904.8" cy="538.7" r="3.2"/><circle cx="914.0" cy="538.7" r="3.2"/><circle cx="923.2" cy="538.7" r="3.2"/><circle cx="932.4" cy="538.7" r="3.2"/><circle cx="941.6" cy="538.7" r="3.2"/><circle cx="950.8" cy="538.7" r="3.2"/><circle cx="960.0" cy="538.7" r="3.2"/><circle cx="969.2" cy="538.7" r="3.2"/><circle cx="978.4" cy="538.7" r="3.2"/><circle cx="987.6" cy="538.7" r="3.2"/><circle cx="996.8" cy="538.7" r="3.2"/><circle cx="1006.0" cy="538.7" r="3.2"/><circle cx="1015.2" cy="538.7" r="3.2"/><circle cx="1024.4" cy="538.7" r="3.2"/><circle cx="1033.6" cy="538.7" r="3.2"/><circle cx="1042.8" cy="538.7" r="3.2"/><circle cx="1052.0" cy="538.7" r="3.2"/></g><rect x="983" y="412" width="6" height="28" rx="3" fill="#f7f7f7" stroke="#dddddd" stroke-width="0.8"/><rect x="247" y="545" width="916" height="119" fill="#ececec"/><rect x="247" y="545" width="916" height="8" fill="url(#grail)"/><path d="M247 552.5 H1163" stroke="#cdcdcd" stroke-width="1.5"/><rect x="247" y="659" width="916" height="5" fill="#d9d9d9"/><rect x="249" y="553" width="245" height="110" rx="3" fill="#f1f1f1" stroke="#d3d3d3" stroke-width="1.5"/><rect x="494" y="553" width="16" height="110" fill="#e9e9e9" stroke="#d8d8d8" stroke-width="1"/><g fill="#b8b8b8"><circle cx="270" cy="565.0" r="2.9"/><circle cx="286.5" cy="565.0" r="2.9"/><circle cx="303" cy="565.0" r="2.9"/><circle cx="319" cy="565.0" r="2.9"/><circle cx="336" cy="565.0" r="2.9"/><circle cx="278" cy="569.5" r="2.9"/><circle cx="294.5" cy="569.5" r="2.9"/><circle cx="311" cy="569.5" r="2.9"/><circle cx="327" cy="569.5" r="2.9"/><circle cx="270" cy="574.0" r="2.9"/><circle cx="286.5" cy="574.0" r="2.9"/><circle cx="303" cy="574.0" r="2.9"/><circle cx="319" cy="574.0" r="2.9"/><circle cx="336" cy="574.0" r="2.9"/></g><rect x="346" y="562" width="140" height="24" rx="2" fill="#ebebeb" stroke="#dcdcdc" stroke-width="1"/><rect x="368" y="561" width="98" height="22" rx="6" fill="#e6e6e6" stroke="#d6d6d6" stroke-width="1"/><rect x="275" y="587.5" width="33.5" height="18" rx="5" fill="#c9dcdd" stroke="#c2c6c6" stroke-width="1"/><circle cx="264.5" cy="596.6" r="2.8" fill="#f2f2f2" stroke="#c8c8c8"/><circle cx="318.8" cy="596.6" r="2.8" fill="#f2f2f2" stroke="#c8c8c8"/><rect x="259" y="619" width="60" height="36" fill="#e0e0e0"/><rect x="277" y="628" width="30" height="16" rx="4" fill="#c7cbea" stroke="#b9bcd6" stroke-width="1"/><g fill="#b4b4b4"><circle cx="336.5" cy="587.5" r="2.7"/><circle cx="336.5" cy="597" r="2.7"/><circle cx="336.5" cy="606" r="2.7"/><circle cx="336.5" cy="615.5" r="2.7"/><circle cx="336.5" cy="624.5" r="2.7"/></g><rect x="334" y="641" width="4" height="7" fill="#c0c0c0"/><rect x="380" y="590" width="8" height="63" fill="#dcdcdc"/><rect x="395" y="589" width="38" height="62" fill="#d6d6d6" stroke="#cccccc" stroke-width="1"/><path d="M400 613 V603 H405 V598 H423 V603 H428 V613 Z" fill="#b3b3b3"/><rect x="401" y="626" width="26" height="14" fill="#b7b7b7"/><g fill="#b8b8b8"><circle cx="444" cy="596" r="2.3"/><circle cx="444" cy="605" r="2.3"/><circle cx="444" cy="614" r="2.3"/><circle cx="444" cy="623" r="2.3"/></g><rect x="450" y="592" width="36" height="62" fill="#dedede" stroke="#d0d0d0" stroke-width="1"/><rect x="455" y="598" width="27" height="8" fill="#c8c8c8"/><rect x="456" y="600" width="25" height="3.5" fill="#a9bde6"/><rect x="455" y="615" width="27" height="8" fill="#c8c8c8"/><rect x="456" y="617" width="25" height="3.5" fill="#a9bde6"/><rect x="455" y="632" width="27" height="10" fill="#c6c6c6"/><rect x="510" y="553" width="653" height="17" fill="#efefef"/><path d="M510 569 H1163" stroke="#d4d4d4" stroke-width="1.5"/><rect x="510" y="570" width="653" height="4.5" fill="#f3f3f3"/><path d="M510 575 H1163" stroke="#c9c9c9" stroke-width="1.5"/><rect x="511" y="576" width="155" height="82.5" fill="#dcdcdc" stroke="#c8c8c8" stroke-width="1.6"/><rect x="514" y="579" width="66" height="77" fill="#d6d6d6"/><rect x="533" y="583" width="47" height="73" rx="6" fill="#a9a9a9"/><rect x="535" y="587" width="34" height="34" rx="5" fill="#8e8e8e"/><rect x="549" y="596" width="7" height="2" fill="#b0b0b0"/><rect x="525" y="604" width="10" height="38" rx="5" fill="#d8efc2"/><circle cx="523" cy="650" r="4.5" fill="none" stroke="#b6b6b6" stroke-width="1.6"/><rect x="580" y="578.5" width="83" height="78" fill="#dedede"/><path d="M596 579.5 H645 L660 594.5 V637.5 L645 652.5 H596 L581 637.5 V594.5 Z" fill="#a3a3a3"/><path d="M585 584 L657 648 M657 584 L585 648" stroke="#dadada" stroke-width="3.6"/><circle cx="585" cy="586" r="3.6" fill="#ededed"/><circle cx="655" cy="586" r="3.6" fill="#ededed"/><circle cx="585" cy="648" r="3.6" fill="#ededed"/><circle cx="655" cy="648" r="3.6" fill="#ededed"/><circle cx="620" cy="616" r="21" fill="#f4f1f1" stroke="#e2b3b3" stroke-width="2.6"/><path d="M608 614 H632" stroke="#d6d0d0" stroke-width="2"/><rect x="577" y="623" width="83" height="16" fill="#a2a2a2"/><path d="M523 612 Q541 590 569 640" stroke="#9a9a9a" stroke-width="6" fill="none"/><rect x="674.5" y="576" width="155" height="82.5" fill="#dcdcdc" stroke="#c8c8c8" stroke-width="1.6"/><rect x="677.5" y="579" width="66" height="77" fill="#d6d6d6"/><rect x="696.5" y="583" width="47" height="73" rx="6" fill="#a9a9a9"/><rect x="698.5" y="587" width="34" height="34" rx="5" fill="#8e8e8e"/><rect x="712.5" y="596" width="7" height="2" fill="#b0b0b0"/><rect x="688.5" y="604" width="10" height="38" rx="5" fill="#d8efc2"/><circle cx="686.5" cy="650" r="4.5" fill="none" stroke="#b6b6b6" stroke-width="1.6"/><rect x="743.5" y="578.5" width="83" height="78" fill="#dedede"/><path d="M759.5 579.5 H808.5 L823.5 594.5 V637.5 L808.5 652.5 H759.5 L744.5 637.5 V594.5 Z" fill="#a3a3a3"/><path d="M748.5 584 L820.5 648 M820.5 584 L748.5 648" stroke="#dadada" stroke-width="3.6"/><circle cx="748.5" cy="586" r="3.6" fill="#ededed"/><circle cx="818.5" cy="586" r="3.6" fill="#ededed"/><circle cx="748.5" cy="648" r="3.6" fill="#ededed"/><circle cx="818.5" cy="648" r="3.6" fill="#ededed"/><circle cx="783.5" cy="616" r="21" fill="#f4f1f1" stroke="#e2b3b3" stroke-width="2.6"/><path d="M771.5 614 H795.5" stroke="#d6d0d0" stroke-width="2"/><path d="M702.5 655 Q708.5 620 736.5 622" stroke="#8f8f8f" stroke-width="3" fill="none"/><path d="M720.5 623 L738.5 628 L726.5 670 L706.5 664 Z" fill="#8c8c8c"/><path d="M734.5 640 L744.5 643 L740.5 665 L729.5 662 Z" fill="#9a9a9a"/><path d="M722.5 636 L732.5 639 M719.5 646 L729.5 649" stroke="#b4b4b4" stroke-width="1.4"/><rect x="838.5" y="576" width="155" height="82.5" fill="#dcdcdc" stroke="#c8c8c8" stroke-width="1.6"/><rect x="841.5" y="579" width="66" height="77" fill="#d6d6d6"/><rect x="860.5" y="583" width="47" height="73" rx="6" fill="#a9a9a9"/><rect x="862.5" y="587" width="34" height="34" rx="5" fill="#8e8e8e"/><rect x="876.5" y="596" width="7" height="2" fill="#b0b0b0"/><rect x="852.5" y="604" width="10" height="38" rx="5" fill="#d8efc2"/><circle cx="850.5" cy="650" r="4.5" fill="none" stroke="#b6b6b6" stroke-width="1.6"/><rect x="907.5" y="578.5" width="83" height="78" fill="#dedede"/><path d="M923.5 579.5 H972.5 L987.5 594.5 V637.5 L972.5 652.5 H923.5 L908.5 637.5 V594.5 Z" fill="#a3a3a3"/><path d="M912.5 584 L984.5 648 M984.5 584 L912.5 648" stroke="#dadada" stroke-width="3.6"/><circle cx="912.5" cy="586" r="3.6" fill="#ededed"/><circle cx="982.5" cy="586" r="3.6" fill="#ededed"/><circle cx="912.5" cy="648" r="3.6" fill="#ededed"/><circle cx="982.5" cy="648" r="3.6" fill="#ededed"/><circle cx="947.5" cy="616" r="21" fill="#f4f1f1" stroke="#e2b3b3" stroke-width="2.6"/><path d="M935.5 614 H959.5" stroke="#d6d0d0" stroke-width="2"/><path d="M866.5 655 Q872.5 620 900.5 622" stroke="#8f8f8f" stroke-width="3" fill="none"/><path d="M884.5 623 L902.5 628 L890.5 670 L870.5 664 Z" fill="#8c8c8c"/><path d="M898.5 640 L908.5 643 L904.5 665 L893.5 662 Z" fill="#9a9a9a"/><path d="M886.5 636 L896.5 639 M883.5 646 L893.5 649" stroke="#b4b4b4" stroke-width="1.4"/><rect x="1002" y="576" width="155" height="82.5" fill="#dcdcdc" stroke="#c8c8c8" stroke-width="1.6"/><rect x="1005" y="579" width="66" height="77" fill="#d6d6d6"/><rect x="1024" y="583" width="47" height="73" rx="6" fill="#a9a9a9"/><rect x="1026" y="587" width="34" height="34" rx="5" fill="#8e8e8e"/><rect x="1040" y="596" width="7" height="2" fill="#b0b0b0"/><rect x="1016" y="604" width="10" height="38" rx="5" fill="#d8efc2"/><circle cx="1014" cy="650" r="4.5" fill="none" stroke="#b6b6b6" stroke-width="1.6"/><rect x="1071" y="578.5" width="83" height="78" fill="#dedede"/><path d="M1087 579.5 H1136 L1151 594.5 V637.5 L1136 652.5 H1087 L1072 637.5 V594.5 Z" fill="#a3a3a3"/><path d="M1076 584 L1148 648 M1148 584 L1076 648" stroke="#dadada" stroke-width="3.6"/><circle cx="1076" cy="586" r="3.6" fill="#ededed"/><circle cx="1146" cy="586" r="3.6" fill="#ededed"/><circle cx="1076" cy="648" r="3.6" fill="#ededed"/><circle cx="1146" cy="648" r="3.6" fill="#ededed"/><circle cx="1111" cy="616" r="21" fill="#f4f1f1" stroke="#e2b3b3" stroke-width="2.6"/><path d="M1099 614 H1123" stroke="#d6d0d0" stroke-width="2"/><path d="M1032 598 L1050 602 L1052 660 L1034 658 Z" fill="#8f8f8f"/><rect x="666.5" y="574" width="6.5" height="86" fill="#e4e4e4" stroke="#d0d0d0" stroke-width="0.8"/><rect x="830.5" y="574" width="6.5" height="86" fill="#e4e4e4" stroke="#d0d0d0" stroke-width="0.8"/><rect x="994.5" y="574" width="6.5" height="86" fill="#e4e4e4" stroke="#d0d0d0" stroke-width="0.8"/><rect x="660" y="411" width="27" height="95" fill="#d8d8d8"/><rect x="680" y="413" width="7" height="91" fill="#e4e4e4"/><path d="M663 456 H680 M663 459 H678 M663 502 H680" stroke="#c6c6c6" stroke-width="0.8"/><path d="M658 417 H680 V453.5 H658 V439.63 H659.2 V435.98 H658 V428.68 H659.2 V425.03 H658 Z" fill="#2e9e1e"/><path d="M658 463 H680 V499.5 H658 V485.63 H659.2 V481.98 H658 V474.68 H659.2 V471.03 H658 Z" fill="#2e9e1e"/><text x="0" y="0" transform="translate(669.5,435.2) rotate(90)" text-anchor="middle" dominant-baseline="central" font-family="Liberation Sans" font-weight="700" font-size="11.5" letter-spacing="0.4" fill="#e4f6dc">10GB</text><text x="0" y="0" transform="translate(669.5,481.2) rotate(90)" text-anchor="middle" dominant-baseline="central" font-family="Liberation Sans" font-weight="700" font-size="11.5" letter-spacing="0.4" fill="#e4f6dc">10GB</text><path d="M348 598.4 H354 V594 L356 591.5 H372 L374 594 V598.4 H379.6 V617 H348 Z" fill="#2e9e1e"/><path d="M348 624 H379.6 V643.5 H374 V648 L372 650.8 H356 L354 648 V643.5 H348 Z" fill="#2e9e1e"/><text x="364" y="608.6" text-anchor="middle" font-family="Liberation Sans" font-weight="700" font-size="11" letter-spacing="-0.4" fill="#bff2ad">10GB</text><text x="364" y="640.6" text-anchor="middle" font-family="Liberation Sans" font-weight="700" font-size="11" letter-spacing="-0.4" fill="#bff2ad">10GB</text><path d="M365.2 591 V398.2 H852.5" stroke="#6a7cd0" stroke-width="2.2" fill="none"/><path d="M346 634.4 H310.9 V410.5 H782.5 V434.2 H852.5" stroke="#6a7cd0" stroke-width="2.2" fill="none"/><path d="M680 434.4 H762.4 V475 H852.5" stroke="#6a7cd0" stroke-width="2.2" fill="none"/><path d="M680 472.6 H741.4 V514.3 H852.5" stroke="#6a7cd0" stroke-width="2.2" fill="none"/><path d="M658 434.3 H128.5 V701" stroke="#4e9d38" stroke-width="3.2" fill="none"/><path d="M680 488 H728 V600.4 H1210.6 V695.3" stroke="#4e9d38" stroke-width="3.2" fill="none"/><path d="M379.6 607.4 H613.2 V681.2 H795.1 V701.6" stroke="#4e9d38" stroke-width="3.2" fill="none"/><path d="M379.6 635.2 H575.4 V995" stroke="#4e9d38" stroke-width="3.2" fill="none"/></svg>
<div class="t" style="left:99.0px;top:700.1px;font-size:22px;line-height:22px;color:#161616;letter-spacing:0.8px;font-weight:400;">Enterprise Network Interface</div>
<svg class="r" style="left:407.5px;top:702.0px" width="18.6" height="18.6" viewBox="0 0 18.6 18.6"><circle cx="9.30" cy="9.30" r="8.3" fill="none" stroke="#6aaad4" stroke-width="1.15"/><rect x="8.70" y="7.50" width="1.2" height="5.8" fill="#6aaad4"/><rect x="8.65" y="4.70" width="1.3" height="1.5" fill="#6aaad4"/></svg>
<div class="r" style="left:99.0px;top:732.0px;width:365.0px;height:303.0px;box-sizing:border-box;border:1.5px solid #e8e8e8;border-radius:5px;background:#fff"></div>
<div class="t" style="left:126.6px;top:761.6px;font-size:17px;line-height:17px;color:#6a6a6a;letter-spacing:0.73px;font-weight:400;">Interface Name</div>
<div class="t" style="left:288.5px;top:761.6px;font-size:17px;line-height:17px;color:#1e1e1e;letter-spacing:0.75px;font-weight:400;">enterprise</div>
<svg class="r" style="left:127.5px;top:793.0px" width="32" height="22" viewBox="0 0 32 22"><path d="M0 0 H10.5 L11.5 2.2 H19.5 L20.5 0 H31 V21 H0 Z" fill="#6b80e2"/></svg>
<div class="t" style="left:164.0px;top:799.6px;font-size:17px;line-height:17px;color:#6a6a6a;letter-spacing:0.73px;font-weight:400;">LACP Mode</div>
<div class="t" style="left:288.5px;top:797.6px;font-size:17px;line-height:17px;color:#1e1e1e;letter-spacing:0.65px;font-weight:400;">Disabled</div>
<svg class="r" style="left:371.0px;top:796.7px" width="18.6" height="18.6" viewBox="0 0 18.6 18.6"><circle cx="9.30" cy="9.30" r="8.3" fill="none" stroke="#6aaad4" stroke-width="1.15"/><rect x="8.70" y="7.50" width="1.2" height="5.8" fill="#6aaad4"/><rect x="8.65" y="4.70" width="1.3" height="1.5" fill="#6aaad4"/></svg>
<div class="t" style="left:126.6px;top:834.6px;font-size:17px;line-height:17px;color:#6a6a6a;letter-spacing:0.73px;font-weight:400;">IP Address</div>
<div class="t" style="left:288.5px;top:834.6px;font-size:17px;line-height:17px;color:#1e1e1e;letter-spacing:1.35px;font-weight:400;">22.</div>
<div class="r" style="left:314.0px;top:835.0px;width:88.0px;height:16.0px;background:linear-gradient(90deg,#e4e4e4,#dadada 25%,#e6e6e6 50%,#d8d8d8 78%,#e2e2e2);filter:blur(1.0px)"></div>
<div class="t" style="left:126.6px;top:871.6px;font-size:17px;line-height:17px;color:#6a6a6a;letter-spacing:0.73px;font-weight:400;">Subnet Mask</div>
<div class="t" style="left:288.5px;top:871.6px;font-size:17px;line-height:17px;color:#1e1e1e;letter-spacing:1.35px;font-weight:400;">24</div>
<div class="t" style="left:126.6px;top:908.2px;font-size:17px;line-height:17px;color:#6a6a6a;letter-spacing:0.73px;font-weight:400;">Default Gateway</div>
<div class="t" style="left:288.5px;top:908.2px;font-size:17px;line-height:17px;color:#1e1e1e;letter-spacing:1.35px;font-weight:400;">22.</div>
<div class="r" style="left:314.0px;top:908.5px;width:64.0px;height:14.5px;background:linear-gradient(90deg,#e4e4e4,#dadada 25%,#e6e6e6 50%,#d8d8d8 78%,#e2e2e2);filter:blur(1.0px)"></div>
<div class="t" style="left:126.6px;top:944.6px;font-size:17px;line-height:17px;color:#6a6a6a;letter-spacing:0.73px;font-weight:400;">DNS Servers</div>
<div class="t" style="left:288.5px;top:944.6px;font-size:17px;line-height:17px;color:#1e1e1e;letter-spacing:1.35px;font-weight:400;">123.</div>
<div class="r" style="left:325.5px;top:944.5px;width:75.0px;height:14.5px;background:linear-gradient(90deg,#e4e4e4,#dadada 25%,#e6e6e6 50%,#d8d8d8 78%,#e2e2e2);filter:blur(1.0px)"></div>
<div class="t" style="left:126.6px;top:984.6px;font-size:17px;line-height:17px;color:#6a6a6a;letter-spacing:0.73px;font-weight:400;">Static Routes</div>
<div class="t" style="left:294.0px;top:985.1px;font-size:17px;line-height:17px;color:#1d9ad6;letter-spacing:0.75px;font-weight:400;">2</div>
<div class="t" style="left:743.5px;top:700.1px;font-size:22px;line-height:22px;color:#161616;letter-spacing:0.92px;font-weight:400;">Management Network Interface</div>
<svg class="r" style="left:1082.7px;top:702.0px" width="18.6" height="18.6" viewBox="0 0 18.6 18.6"><circle cx="9.30" cy="9.30" r="8.3" fill="none" stroke="#6aaad4" stroke-width="1.15"/><rect x="8.70" y="7.50" width="1.2" height="5.8" fill="#6aaad4"/><rect x="8.65" y="4.70" width="1.3" height="1.5" fill="#6aaad4"/></svg>
<div class="r" style="left:744.0px;top:732.0px;width:365.0px;height:150.0px;box-sizing:border-box;border:1.5px solid #e8e8e8;border-radius:5px;background:#fff"></div>
<div class="t" style="left:771.6px;top:762.0px;font-size:17px;line-height:17px;color:#6a6a6a;letter-spacing:0.73px;font-weight:400;">Interface Name</div>
<div class="t" style="left:924.5px;top:762.0px;font-size:17px;line-height:17px;color:#1e1e1e;letter-spacing:0.75px;font-weight:400;">management</div>
<div class="t" style="left:771.6px;top:798.3px;font-size:17px;line-height:17px;color:#6a6a6a;letter-spacing:0.73px;font-weight:400;">IP Address</div>
<div class="t" style="left:924.5px;top:798.3px;font-size:17px;line-height:17px;color:#1e1e1e;letter-spacing:1.35px;font-weight:400;">32.</div>
<div class="r" style="left:950.0px;top:799.4px;width:76.5px;height:13.5px;background:linear-gradient(90deg,#e4e4e4,#dadada 25%,#e6e6e6 50%,#d8d8d8 78%,#e2e2e2);filter:blur(1.0px)"></div>
<div class="t" style="left:771.6px;top:835.3px;font-size:17px;line-height:17px;color:#6a6a6a;letter-spacing:0.73px;font-weight:400;">Subnet Mask</div>
<div class="t" style="left:924.5px;top:835.3px;font-size:17px;line-height:17px;color:#1e1e1e;letter-spacing:1.35px;font-weight:400;">255.</div>
<div class="r" style="left:960.8px;top:836.0px;width:88.0px;height:14.5px;background:linear-gradient(90deg,#e4e4e4,#dadada 25%,#e6e6e6 50%,#d8d8d8 78%,#e2e2e2);filter:blur(1.0px)"></div>
<div class="t" style="left:1130.0px;top:700.1px;font-size:22px;line-height:22px;color:#161616;letter-spacing:0.8px;font-weight:400;">Intracluster Link Network</div>
<svg class="r" style="left:1399.5px;top:702.0px" width="18.6" height="18.6" viewBox="0 0 18.6 18.6"><circle cx="9.30" cy="9.30" r="8.3" fill="none" stroke="#6aaad4" stroke-width="1.15"/><rect x="8.70" y="7.50" width="1.2" height="5.8" fill="#6aaad4"/><rect x="8.65" y="4.70" width="1.3" height="1.5" fill="#6aaad4"/></svg>
<div class="r" style="left:1130.7px;top:732.0px;width:365.0px;height:230.0px;box-sizing:border-box;border:1.5px solid #e8e8e8;border-radius:5px;background:#fff"></div>
<div class="t" style="left:1158.6px;top:762.0px;font-size:17px;line-height:17px;color:#6a6a6a;letter-spacing:0.73px;font-weight:400;">Interface Name</div>
<div class="t" style="left:1319.5px;top:762.0px;font-size:17px;line-height:17px;color:#1e1e1e;letter-spacing:0.75px;font-weight:400;">cluster</div>
<svg class="r" style="left:1159.5px;top:793.0px" width="32" height="22" viewBox="0 0 32 22"><path d="M0 0 H10.5 L11.5 2.2 H19.5 L20.5 0 H31 V21 H0 Z" fill="#6b80e2"/></svg>
<div class="t" style="left:1196.0px;top:799.9px;font-size:17px;line-height:17px;color:#6a6a6a;letter-spacing:0.73px;font-weight:400;">LACP Mode</div>
<div class="t" style="left:1319.5px;top:798.3px;font-size:17px;line-height:17px;color:#1e1e1e;letter-spacing:0.65px;font-weight:400;">Disabled</div>
<svg class="r" style="left:1402.7px;top:796.7px" width="18.6" height="18.6" viewBox="0 0 18.6 18.6"><circle cx="9.30" cy="9.30" r="8.3" fill="none" stroke="#6aaad4" stroke-width="1.15"/><rect x="8.70" y="7.50" width="1.2" height="5.8" fill="#6aaad4"/><rect x="8.65" y="4.70" width="1.3" height="1.5" fill="#6aaad4"/></svg>
<div class="t" style="left:1158.6px;top:835.3px;font-size:17px;line-height:17px;color:#6a6a6a;letter-spacing:0.73px;font-weight:400;">IP Address</div>
<div class="t" style="left:1319.5px;top:835.3px;font-size:17px;line-height:17px;color:#1e1e1e;letter-spacing:1.35px;font-weight:400;">169.</div>
<div class="r" style="left:1356.6px;top:835.5px;width:78.0px;height:15.0px;background:linear-gradient(90deg,#e4e4e4,#dadada 25%,#e6e6e6 50%,#d8d8d8 78%,#e2e2e2);filter:blur(1.0px)"></div>
<div class="t" style="left:1158.6px;top:871.6px;font-size:17px;line-height:17px;color:#6a6a6a;letter-spacing:0.73px;font-weight:400;">Subnet Mask</div>
<div class="t" style="left:1319.5px;top:871.6px;font-size:17px;line-height:17px;color:#1e1e1e;letter-spacing:1.35px;font-weight:400;">255.</div>
<div class="r" style="left:1355.7px;top:871.5px;width:112.5px;height:15.0px;background:linear-gradient(90deg,#e4e4e4,#dadada 25%,#e6e6e6 50%,#d8d8d8 78%,#e2e2e2);filter:blur(1.0px)"></div>
<div class="t" style="left:1158.6px;top:911.4px;font-size:17px;line-height:17px;color:#6a6a6a;letter-spacing:0.73px;font-weight:400;">Static Routes</div>
<div class="t" style="left:1325.0px;top:911.9px;font-size:17px;line-height:17px;color:#1d9ad6;letter-spacing:0.75px;font-weight:400;">2</div>
<div class="t" style="left:555.0px;top:997.1px;font-size:22px;line-height:22px;color:#161616;letter-spacing:0.99px;font-weight:400;">Internet Network Interface</div>
<svg class="r" style="left:839.1px;top:999.0px" width="18.6" height="18.6" viewBox="0 0 18.6 18.6"><circle cx="9.30" cy="9.30" r="8.3" fill="none" stroke="#6aaad4" stroke-width="1.15"/><rect x="8.70" y="7.50" width="1.2" height="5.8" fill="#6aaad4"/><rect x="8.65" y="4.70" width="1.3" height="1.5" fill="#6aaad4"/></svg>
<div class="r" style="left:555.8px;top:1029.0px;width:366.0px;height:180.0px;box-sizing:border-box;border:1.5px solid #e8e8e8;border-radius:5px;background:#fff"></div>
<div class="t" style="left:583.6px;top:1058.4px;font-size:17px;line-height:17px;color:#6a6a6a;letter-spacing:0.73px;font-weight:400;">Interface Name</div>
<div class="t" style="left:736.5px;top:1058.4px;font-size:17px;line-height:17px;color:#1e1e1e;letter-spacing:0.75px;font-weight:400;">internet</div>
<div class="t" style="left:583.6px;top:1095.3px;font-size:17px;line-height:17px;color:#6a6a6a;letter-spacing:0.73px;font-weight:400;">IP Address</div>
<div class="t" style="left:736.5px;top:1095.3px;font-size:17px;line-height:17px;color:#1e1e1e;letter-spacing:1.35px;font-weight:400;">55.</div>
<div class="r" style="left:763.0px;top:1096.0px;width:98.0px;height:14.0px;background:linear-gradient(90deg,#e4e4e4,#dadada 25%,#e6e6e6 50%,#d8d8d8 78%,#e2e2e2);filter:blur(1.0px)"></div>
<div class="t" style="left:583.6px;top:1131.6px;font-size:17px;line-height:17px;color:#6a6a6a;letter-spacing:0.73px;font-weight:400;">Subnet Mask</div>
<div class="t" style="left:736.5px;top:1131.6px;font-size:17px;line-height:17px;color:#1e1e1e;letter-spacing:1.35px;font-weight:400;">255.</div>
<div class="r" style="left:773.8px;top:1133.0px;width:87.0px;height:13.5px;background:linear-gradient(90deg,#e4e4e4,#dadada 25%,#e6e6e6 50%,#d8d8d8 78%,#e2e2e2);filter:blur(1.0px)"></div>
<div class="t" style="left:830.5px;top:1165.4px;font-size:17px;line-height:17px;color:#1d9ad6;letter-spacing:0.1px;font-weight:400;">Edit</div>
<div class="r" style="left:0.0px;top:1219.0px;width:2532.0px;height:9.0px;background:linear-gradient(rgba(0,0,0,0),rgba(0,0,0,0.04) 60%,rgba(0,0,0,0.13))"></div>
<div class="r" style="left:0.0px;top:1228.0px;width:2532.0px;height:79.0px;background:linear-gradient(#fff,#fff 60%,#f9f9f9)"></div>
<svg class="r" style="left:8px;top:1268px" width="20" height="22" viewBox="0 0 20 22"><path d="M5.4 6.2 V3 Q5.4 1.5 6.9 1.5 H15.8 Q17.3 1.5 17.3 3 V18.2 Q17.3 19.7 15.8 19.7 H6.9 Q5.4 19.7 5.4 18.2 V15.7" fill="none" stroke="#2a93c2" stroke-width="1.25"/><path d="M1.6 11 H10 M5.6 7 L1.6 11 L5.6 15" fill="none" stroke="#2a93c2" stroke-width="1.25"/></svg>
<div class="t" style="left:35.0px;top:1270.9px;font-size:17px;line-height:17px;color:#2590c2;letter-spacing:0.24px;font-weight:400;">Exit</div>
<div class="r" style="left:2200.5px;top:1258.0px;width:145.5px;height:43.5px;box-sizing:border-box;border:1.2px solid #3a9ac6;border-radius:7px;background:#fff"></div>
<div class="t" style="left:2252.0px;top:1271.1px;font-size:17px;line-height:17px;color:#1d93c8;letter-spacing:0.1px;font-weight:400;">Back</div>
<div class="r" style="left:2375.0px;top:1257.0px;width:146.0px;height:44.0px;border-radius:7px;background:#049fd9"></div>
<div class="t" style="left:2428.0px;top:1270.6px;font-size:17px;line-height:17px;color:#fff;letter-spacing:0.7px;font-weight:400;">Next</div>

</body></html>
